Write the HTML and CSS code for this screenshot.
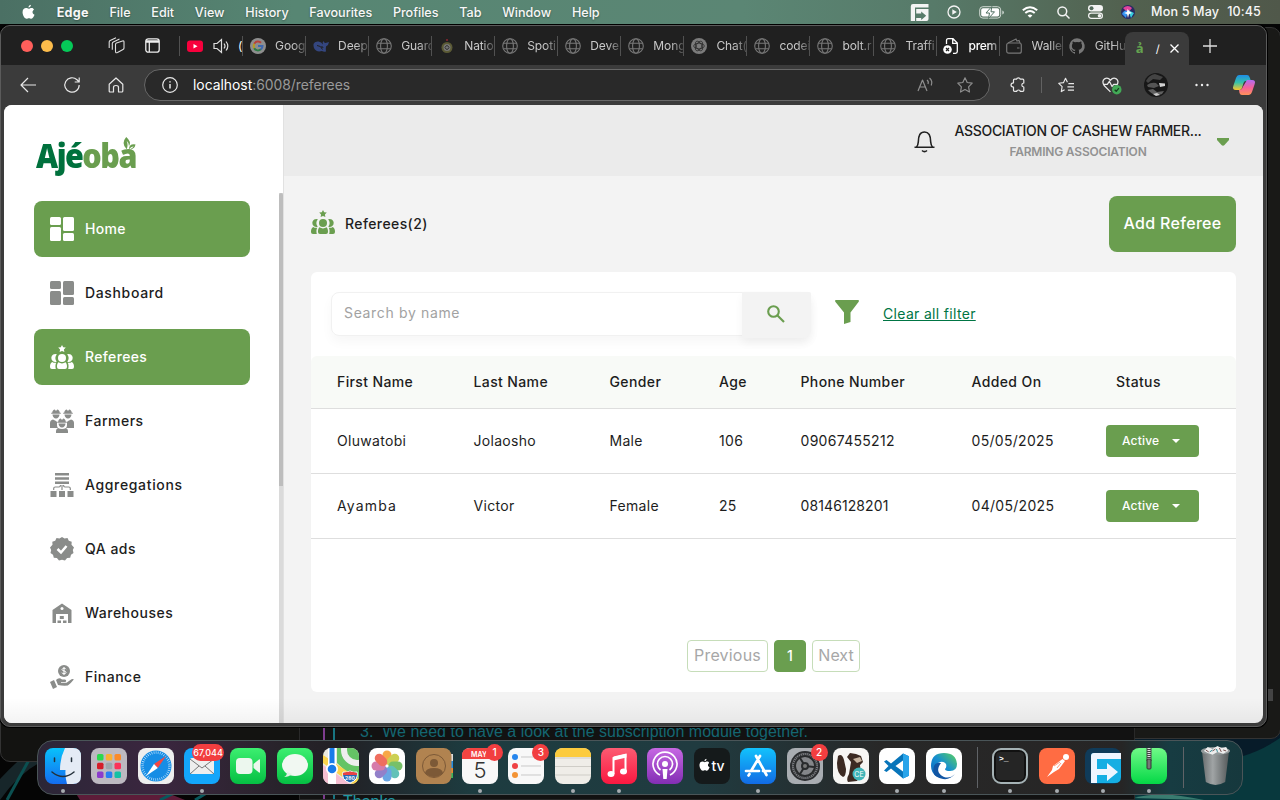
FILE: index.html
```html
<!DOCTYPE html>
<html lang="en">
<head>
<meta charset="utf-8">
<title>Referees</title>
<link rel="stylesheet" href="styles.css">
</head>
<body>
<svg class="defs" aria-hidden="true">
  <defs>
    <symbol id="globe" viewBox="0 0 16 16"><g fill="none" stroke="#777" stroke-width="1.1"><circle cx="8" cy="8" r="7.3"/><ellipse cx="8" cy="8" rx="3.4" ry="7.3"/><path d="M1.4 5.3h13.2M1.4 10.7h13.2"/></g></symbol>
    <symbol id="grid" viewBox="0 0 24 24"><rect width="11" height="8" rx="1.5"/><rect y="10" width="11" height="14" rx="1.5"/><rect x="13" width="11" height="14" rx="1.5"/><rect x="13" y="16" width="11" height="8" rx="1.5"/></symbol>
    <symbol id="referees" viewBox="0 0 24 24"><path d="M12 0l1.200 2.200 2.600.4-1.900 1.800.5 2.600L12 5.900 9.600 7l.5-2.600-1.900-1.800 2.600-.4z"/><circle cx="12" cy="13" r="4"/><path d="M6.900 9.300A4 4 0 1 0 6.700 16.700 6 6 0 0 1 6.900 9.300zM17.100 9.300a4 4 0 1 1 .2 7.400 6 6 0 0 0-.2-7.400zM0 21.500c0-2.200.8-3.800 2.200-4.500 1.200.8 2.800 1 4 .7-.8 1.500-1 4-.4 6.300H2C.7 24 0 23.200 0 21.500zM24 21.500c0-2.200-.8-3.800-2.200-4.500-1.200.8-2.800 1-4 .7.8 1.500 1 4 .4 6.300H22c1.300 0 2-.8 2-2.500zM7 21.500c0-2 .6-3.300 1.400-4.200 2.200 1.500 5 1.500 7.200 0 .8.900 1.400 2.200 1.400 4.200 0 1.700-.7 2.500-2 2.500H9c-1.300 0-2-.8-2-2.500z"/></symbol>
    <symbol id="farmer" viewBox="0 0 12 14"><path d="M1.200 3.800h1C2.300 1.600 3.500.7 4.800.4L6 2 7.200.4C8.500.7 9.700 1.600 9.800 3.800h1v1H1.200zM2.500 5.600h7C9.400 8 8 9.500 6 9.500S2.600 8 2.500 5.600z"/></symbol>
    <symbol id="apple" viewBox="0 0 14 16"><path d="M9.600.2c.1 1.600-1.200 3-2.600 3C6.800 1.700 8.200.3 9.600.2zM12.900 5.500c-2.300 1.300-2 4.400.6 5.400-.6 1.800-1.900 4.300-3.400 4.300-1 0-1.400-.6-2.600-.6s-1.600.6-2.600.6C2.600 15.200.6 11 .6 8.200.6 5.200 2.500 3.700 4.300 3.700c1.200 0 2.100.7 3 .7.800 0 1.800-.8 3.300-.8 1 0 1.800.5 2.300 1.900z"/></symbol>
  </defs>
</svg>

<header class="menubar">
  <nav class="menus">
    <svg class="apple-logo" viewBox="0 0 14 16" fill="#fff"><use href="#apple"/></svg>
    <b>Edge</b><span>File</span><span>Edit</span><span>View</span><span>History</span><span>Favourites</span><span>Profiles</span><span>Tab</span><span>Window</span><span>Help</span>
  </nav>
  <div class="tray">
    <svg width="19" height="19" viewBox="0 0 19 19"><path d="M3 1h15.500v3.500H5V18H.8V3.200Q.8 1 3 1z" fill="#f4f4f4"/><path d="M6.200 6h12.300v10q0 2-2 2H6.200v-3h5v2l5-4.300-5-4.200v2h-5z" fill="#f4f4f4"/></svg>
    <svg width="14" height="14" viewBox="0 0 14 14" fill="none" stroke="#f4f4f4" stroke-width="1.300"><circle cx="7" cy="7" r="6"/><path d="M5.300 4.300v5.400L9.800 7z" fill="#f4f4f4" stroke="none"/></svg>
    <svg width="25" height="13" viewBox="0 0 25 13"><rect x=".7" y=".7" width="21" height="11.400" rx="3.200" fill="none" stroke="#cfd8d2"/><rect x="2.200" y="2.200" width="18" height="8.400" rx="1.800" fill="#fff"/><path d="M23.300 4.500q1.600.3 1.600 2t-1.600 2z" fill="#cfd8d2"/><path d="M12.800.5L7 7h3.500L9.500 12.500 15.500 5.800H12z" fill="#fff" stroke="#537364"/></svg>
    <svg width="16" height="12" viewBox="0 0 16 12" fill="none" stroke="#fff" stroke-width="2"><path d="M.8 4.300q7.200-6.200 14.400 0M3.300 7q4.700-4 9.400 0"/><path d="M5.600 9.400L8 11.800l2.400-2.400Q8 7.600 5.600 9.400z" fill="#fff" stroke="none"/></svg>
    <svg width="13" height="13" viewBox="0 0 13 13" fill="none" stroke="#f4f4f4" stroke-width="1.500"><circle cx="5.300" cy="5.300" r="4.400"/><path d="M8.500 8.500l4 4"/></svg>
    <svg width="15" height="14" viewBox="0 0 15 14"><rect width="15" height="6.500" rx="3.200" fill="#f4f4f4"/><circle cx="3.500" cy="3.200" r="2" fill="#526a5c"/><rect x=".6" y="8.100" width="13.800" height="5.300" rx="2.600" fill="none" stroke="#f4f4f4" stroke-width="1.200"/><circle cx="11.500" cy="10.700" r="1.800" fill="#f4f4f4"/></svg>
    <svg class="siri" width="14" height="14" viewBox="0 0 14 14"><circle cx="7" cy="7" r="7" fill="#282a62"/><path d="M2 3Q7-1 11 3L7 8z" fill="#e1439c"/><path d="M1 9Q3 4 7 6l-2 7z" fill="#3695f1"/><path d="M7 5l6 3-3 5z" fill="#35cddb"/><path d="M6.500 4L9 7l2 1-3 1-1 4-1-4-3-1 3-1z" fill="#fff"/></svg>
    <span class="clock"><span>Mon 5 May</span><span>10:45</span></span>
  </div>
</header>

<main class="desktop">
  <svg class="wallpaper" viewBox="0 0 1280 776" preserveAspectRatio="none">
    <rect width="1280" height="776" fill="#050505"/>
    <path d="M0 755Q28 725 60 705V730Q25 740 0 776z" fill="#17262a"/><path d="M7 776L41 714" stroke="#0b4f50" stroke-width="3"/>
    <path d="M75 768h90l20 8H80z" fill="#5d1c39"/><path d="M160 776l20-10M195 776l20-12" stroke="#07575c" stroke-width="3"/>
    <rect x="1134" y="700" width="146" height="76" fill="#071b29"/><path d="M1180 735Q1235 745 1280 714V776h-146v-40z" fill="#08383d"/><path d="M1134 774q26-8 70 2z" fill="#397c70"/>
  </svg>
  <div class="back-window back-right"><i></i></div>
  <div class="back-window back-left"></div>
  <div class="notes"><p>3.&nbsp; We need to have a look at the subscription module together.</p><p class="thanks">Thanks</p></div>

  <section class="browser">
    <div class="tabstrip">
      <div class="lights"><i class="red"></i><i class="amber"></i><i class="green"></i></div>
      <div class="strip-tools">
        <svg width="17" height="17" viewBox="0 0 17 17" fill="none" stroke="#ddd" stroke-width="1.100" stroke-linejoin="round"><path d="M7.500 7.500q0-1 1-1.400L14.500 4q1.500-.4 1.500 1v6q0 1-1 1.500l-5.500 3q-2 .8-2-1zM4.300 12.800V6.500q0-1 1-1.500l6.200-3M1.200 11V5q0-1 1-1.500L8 .8"/></svg>
        <svg width="15" height="15" viewBox="0 0 15 15" fill="none" stroke="#eee" stroke-width="1.300"><rect x=".8" y=".8" width="13.400" height="13.400" rx="2.500"/><path d="M1 4.200h13M1 3h13M4.300 4v10"/></svg>
      </div>
      <div class="tabs">
        <div class="tab tab-audio"><svg class="fav" viewBox="0 0 16 16"><rect y="2.500" width="16" height="11.500" rx="3" fill="#f8003c"/><path d="M6.500 6v4.500l4-2.200z" fill="#fff"/></svg><svg class="fav" viewBox="0 0 16 16" fill="none" stroke="#ddd" stroke-width="1.200"><path d="M1 5.500h3l4.500-4v13l-4.500-4H1zM11 5.500q2 2.500 0 5M13 3.500q3.600 4.500 0 9"/></svg><span>(</span></div>
        <div class="tab"><svg class="fav" viewBox="0 0 16 16"><circle cx="8" cy="8" r="8" fill="#8e8e8e"/><g fill="none" stroke-width="2"><path d="M4.200 5.800A4.300 4.300 0 0 1 11 4.800" stroke="#b8403a"/><path d="M4.200 5.800a5 5 0 0 0 0 4.500" stroke="#b89a20"/><path d="M4.200 10.300a4.300 4.300 0 0 0 6.600 1" stroke="#2e7c46"/><path d="M8 8h4.500q0 2-1.700 3.500" stroke="#3e68b0"/></g></svg><span>Goog</span></div>
        <div class="tab"><svg class="fav" viewBox="0 0 16 16"><path d="M.5 6q1-3 5-2.500 3 .5 4.500 3Q9 4 10.500 3q.5 2 2 2L16 4q-.5 3.500-3 4.500-.5 3 0 5-2.500.5-4-.5-6 1.500-8-3Q.3 8 .500 6z" fill="#34467f"/><path d="M4 7.500q4 0 5.500 4M8 9q2-1 2 1" stroke="#202020" fill="none"/></svg><span>Deep</span></div>
        <div class="tab"><svg class="fav"><use href="#globe"/></svg><span>Guard</span></div>
        <div class="tab"><svg class="fav" viewBox="0 0 16 16"><circle cx="8" cy="9.500" r="5.500" fill="#5b5a35"/><circle cx="8" cy="9.500" r="3.500" fill="#777"/><path d="M6 9.500q2-4 4 0-2 4-4 0" fill="none" stroke="#333"/><circle cx="8" cy="2" r="1" fill="#8e2430"/></svg><span>Natio</span></div>
        <div class="tab"><svg class="fav"><use href="#globe"/></svg><span>Spoti</span></div>
        <div class="tab"><svg class="fav"><use href="#globe"/></svg><span>Deve</span></div>
        <div class="tab"><svg class="fav"><use href="#globe"/></svg><span>Mong</span></div>
        <div class="tab"><svg class="fav" viewBox="0 0 16 16"><circle cx="8" cy="8" r="8" fill="#7c7c7c"/><g fill="none" stroke="#2b2b2b" stroke-width=".8"><ellipse cx="8" cy="8" rx="5.300" ry="2.800"/><ellipse cx="8" cy="8" rx="5.300" ry="2.800" transform="rotate(60 8 8)"/><ellipse cx="8" cy="8" rx="5.300" ry="2.800" transform="rotate(120 8 8)"/></g></svg><span>Chat(</span></div>
        <div class="tab"><svg class="fav"><use href="#globe"/></svg><span>codei</span></div>
        <div class="tab"><svg class="fav"><use href="#globe"/></svg><span>bolt.r</span></div>
        <div class="tab"><svg class="fav"><use href="#globe"/></svg><span>Traffi</span></div>
        <div class="tab tab-bright"><svg class="fav" viewBox="0 0 16 16"><path d="M3.500 6V2.500Q3.500.7 5.200.7H10L14.300 5v8.500q0 1.800-1.800 1.800H10M9.700 1v4.300h4.500" fill="none" stroke="#fff" stroke-width="1.300"/><circle cx="4.500" cy="11.500" r="4.300" fill="#fff"/><path d="M3 10l3 3M6 10l-3 3" stroke="#222" stroke-width="1.200"/></svg><span>prem</span></div>
        <div class="tab"><svg class="fav" viewBox="0 0 16 16" fill="none" stroke="#777" stroke-width="1.200"><rect x=".7" y="5" width="14.600" height="10.200" rx="2"/><path d="M2 5l8-4 1 2 2-.5 1 2.500M11 10h2.500"/></svg><span>Walle</span></div>
        <div class="tab"><svg class="fav" viewBox="0 0 16 16"><path d="M8 .3a8 8 0 0 0-2.500 15.500c.4 0 .5-.2.500-.4v-1.500c-2.200.5-2.700-1-2.700-1-.4-.9-.9-1.100-.9-1.100-.7-.5.100-.5.100-.5.800 0 1.200.8 1.200.8.700 1.200 1.900.9 2.300.7.100-.5.300-.9.500-1.100-1.800-.2-3.600-.9-3.600-4 0-.8.300-1.500.8-2.100-.1-.2-.4-1 .1-2.100 0 0 .7-.2 2.200.8a7.500 7.500 0 0 1 4 0c1.500-1 2.200-.8 2.200-.8.500 1.100.2 1.900.1 2.100.5.600.8 1.300.8 2.100 0 3.100-1.900 3.800-3.600 4 .3.200.5.700.5 1.500v2.200c0 .2.100.4.500.4A8 8 0 0 0 8 .3z" fill="#777"/></svg><span>GitHu</span></div>
        <div class="tab active-tab"><span class="favicon-a">ả</span><span class="short-title">/</span><svg width="9" height="9" viewBox="0 0 9 9" stroke="#fff" stroke-width="1.300"><path d="M.5.5l8 8M8.500.5l-8 8"/></svg></div>
        <svg class="new-tab" width="14" height="14" viewBox="0 0 14 14" stroke="#ddd" stroke-width="1.300"><path d="M7 0v14M0 7h14"/></svg>
      </div>
    </div>

    <div class="toolbar">
      <div class="nav-tools">
        <svg viewBox="0 0 16 16"><path d="M16 8H1M8 1L1 8l7 7"/></svg>
        <svg viewBox="0 0 16 16"><path d="M15.200 8a7.200 7.200 0 1 1-2.200-5.200L15.200 5M15.200.5V5h-4.500"/></svg>
        <svg viewBox="0 0 16 16"><path d="M1.200 7.200L8 1l6.800 6.200V14q0 1-1 1h-3.300v-4.500q0-2-2.500-2t-2.500 2V15H2.200q-1 0-1-1z"/></svg>
      </div>
      <div class="address">
        <svg viewBox="0 0 16 16"><circle cx="8" cy="8" r="7.300"/><path d="M8 7v4.500M8 4.300v1.300" stroke-width="1.500"/></svg>
        <span class="url"><b>localhost</b>:6008/referees</span>
        <svg class="dim" viewBox="0 0 16 16"><path d="M1 14L5.500 3 10 14M2.500 10h6M10 3q2 1.500 1 4M12.500 1q3.500 3 1.700 7.500"/></svg>
        <svg class="dim" viewBox="0 0 16 16"><path d="M8 .8l2.200 4.700 5 .7-3.600 3.600.9 5.200L8 12.500l-4.500 2.500.9-5.200L.8 6.200l5-.7z"/></svg>
      </div>
      <div class="ext-tools">
        <svg viewBox="0 0 16 16"><path d="M4.500 2.200h2a2 2 0 0 1 3.800 0h2.500q1 0 1 1V6q-2 .3-2 2t2 2v3.300q0 1-1 1h-2.500q-.2-1.300-1.800-1.300t-1.800 1.300H4.500q-1 0-1-1V10Q1 10 1 8t2.500-2.200V3.200q0-1 1-1z"/></svg>
        <i class="bar"></i>
        <svg viewBox="0 0 17 16"><path d="M10 5L8 .8 5.800 5.500l-5 .7 3.600 3.600-.9 5.200L7 13M11 6.500h6M10 10h7M10.500 13.500H17"/></svg>
        <svg class="heart" viewBox="0 0 18 16"><path d="M8 14L2 8Q-.5 4 2.500 1.700 5.500 0 8 3q2.500-3 5.500-1.300Q16.500 4 14 8M1 7h4l2-3 2.500 5L11 7h3"/><circle cx="14" cy="12" r="4.500" fill="#42a956" stroke="none"/><path d="M12 12l1.500 1.500 2.500-3" stroke="#173c20"/></svg>
        <svg class="avatar" viewBox="0 0 24 24"><g stroke="none"><circle cx="12" cy="12" r="12" fill="#171717"/><path d="M2 8q3-6 9-7l8 3-3 3-7-1-5 4z" fill="#444"/><path d="M3 12q4-3 9-2l3 3-5 2-6-1z" fill="#555"/><path d="M15 10l6 .5v2.500l-5 1z" fill="#d0d0d0"/><path d="M4 17l5-1 4 3 7-1-2 3q-8 3-14-4z" fill="#606060"/><path d="M9 21l4-1 3 2-4 1z" fill="#ccc"/></g></svg>
        <svg viewBox="0 0 16 16"><g fill="#eee" stroke="none"><circle cx="2.500" cy="8" r="1.200"/><circle cx="8" cy="8" r="1.200"/><circle cx="13.500" cy="8" r="1.200"/></g></svg>
        <svg class="copilot" viewBox="0 0 22 20"><defs><linearGradient id="cp1" x2="0" y2="1"><stop stop-color="#1e8de8"/><stop offset=".5" stop-color="#35c1a9"/><stop offset="1" stop-color="#fbc52b"/></linearGradient><linearGradient id="cp2" x2="0" y2="1"><stop stop-color="#b16cf2"/><stop offset=".5" stop-color="#f4619c"/><stop offset="1" stop-color="#ff9158"/></linearGradient></defs><g stroke="none"><path d="M6 0h8q2 0 2.500 2L18 6h-5q-2 0-2.500 2L9 13q-.6 2-2.500 2H3Q-1 15 .3 11L3 3Q4 0 6 0z" fill="url(#cp1)"/><path d="M14 5h5q4 0 2.700 4L19 17q-1 3-3 3H9q-2 0-2.500-2L6 15q3 0 3.800-3z" fill="url(#cp2)"/></g></svg>
      </div>
    </div>

    <div class="page">
      <aside class="sidebar">
        <div class="logo"><div class="wordmark"><b>Ajé</b><b class="light">oba</b></div><svg viewBox="0 0 14 15" fill="#6a9e4f"><path d="M4.500 13Q-2 7 4 0q6 5 3 10 0-4-2.500-6 2 5 0 9zM7 13q0-6 7-5-1 5-6 5 3-1 4-3-3 .5-5 3z"/></svg></div>
        <div class="menu-scroll">
          <nav class="side-nav">
            <a class="nav-item selected"><svg><use href="#grid"/></svg><span>Home</span></a>
            <a class="nav-item roomy"><svg><use href="#grid"/></svg><span>Dashboard</span></a>
            <a class="nav-item selected"><svg><use href="#referees"/></svg><span>Referees</span></a>
            <a class="nav-item"><svg viewBox="0 0 24 24"><use href="#farmer" width="12" height="14"/><use href="#farmer" x="12" width="12" height="14"/><use href="#farmer" x="6" y="9" width="12" height="14"/><path d="M0 19v-5q0-3 3-3.500l3 1.500 1 1v3q0 2 1 3zM24 19v-5q0-3-3-3.500L18 12l-1 1v3q0 2-1 3zM6 24v-2q0-2 2-3 4 2 8 0 2 1 2 3v2z"/></svg><span>Farmers</span></a>
            <a class="nav-item roomy"><svg viewBox="0 0 24 24"><path d="M5 0h14v2.500H5zM5 4.200h14v2.500H5zM5 8.400h14v2.500H5zM.5 18H6.500v6h-6zM9 18h6v6H9zM17.500 18h6v6h-6z"/><path d="M3.700 17v-1.500q0-1.500 1.500-1.500H9q1.500 0 1.500-2M20.300 17v-1.500q0-1.500-1.500-1.500H15q-1.500 0-1.500-2M12 12v5" fill="none" stroke="#8a8c8a" stroke-width="1.200"/></svg><span>Aggregations</span></a>
            <a class="nav-item"><svg viewBox="0 0 24 24"><path d="M12 0l2.500 1.500 3-.5 1.300 2.700 2.900 1.100-.2 3L24 10.500 22.800 13l.7 3-2.500 1.700-.8 3-3.100.2L15 23.400l-3-.6-3 .6-2.100-2.500-3.100-.2-.8-3L.5 16l.7-3L0 10.500l2.500-2.700-.2-3 2.900-1.100L6.500 1l3 .5z"/><path d="M7.500 12l3.500 3.500L16.500 9" fill="none" stroke="#fff" stroke-width="2.500"/></svg><span>QA ads</span></a>
            <a class="nav-item"><svg viewBox="0 0 24 24"><path d="M12 2.500L21.500 9v13H18v-9H6v9H2.500V9z"/><circle cx="12" cy="7.600" r="1.500" fill="#fff"/><path d="M9.800 15h4v3h-4zM7.500 19.500h3.500V22H7.500zM13 19.500h3.500V22H13z"/></svg><span>Warehouses</span></a>
            <a class="nav-item"><svg viewBox="0 0 24 24"><circle cx="14" cy="6" r="6"/><path d="M16 4.200q-.5-1-2-1t-2 1.200q0 1.200 2 1.500t2 1.600q0 1.200-2 1.200t-2-1.100M14 2v8" fill="none" stroke="#fff" stroke-width="1"/><path d="M0 17l4-2 3 7-4 2zM6 15q3-3 6-.5h3q2 .8.500 2.500H11v.8h5.500l5-3.600q2-.7 2.300.4-2.500 3.400-6 5.900Q13 21 8 20z"/></svg><span>Finance</span></a>
          </nav>
          <div class="scroll-track"><i></i></div>
        </div>
      </aside>
      <div class="content">
        <div class="app-header">
          <svg class="bell" width="21" height="22" viewBox="0 0 21 22" fill="none" stroke="#222" stroke-width="1.600"><path d="M.5 16.200h20M2.500 16q1.500-1.500 1.800-5 0-10 6.200-10t6.200 10q.3 3.500 1.800 5"/><path d="M8 19.500q2.500 2.400 5 0"/></svg>
          <div class="account"><strong>ASSOCIATION OF CASHEW FARMER...</strong><span>FARMING ASSOCIATION</span></div>
          <svg class="caret" width="12" height="8" viewBox="0 0 12 8"><path d="M0 0h12v2L7.500 7Q6 8.500 4.500 7L0 2z" fill="#6a9e4f"/></svg>
        </div>
        <div class="body">
          <div class="title-row">
            <h1><svg><use href="#referees"/></svg><span>Referees(2)</span></h1>
            <button class="add">Add Referee</button>
          </div>
          <div class="card">
            <div class="filters">
              <div class="search"><span>Search by name</span><button><svg width="18" height="18" viewBox="0 0 18 18" fill="none" stroke="#6a9e4f" stroke-width="2.100"><circle cx="6.500" cy="6.500" r="5.300"/><path d="M10.500 10.500l6.500 6.500"/></svg></button></div>
              <svg class="funnel" width="24" height="24" viewBox="0 0 24 24" fill="#6a9e4f"><path d="M.5 0h23q1 .8 0 2L15.500 12.500V22L9 24V12.500L.5 2q-1-1.200 0-2z"/></svg>
              <a>Clear all filter</a>
            </div>
            <div class="table">
              <div class="row head"><span>First Name</span><span>Last Name</span><span>Gender</span><span>Age</span><span>Phone Number</span><span>Added On</span><span class="status-head">Status</span></div>
              <div class="row"><span>Oluwatobi</span><span>Jolaosho</span><span>Male</span><span>106</span><span>09067455212</span><span>05/05/2025</span><button><span>Active</span><svg width="8" height="4" viewBox="0 0 8 4"><path d="M0 0h8L4 4z" fill="#fff"/></svg></button></div>
              <div class="row"><span class="wide-name">Ayamba</span><span>Victor</span><span>Female</span><span>25</span><span class="narrow">08146128201</span><span>04/05/2025</span><button><span>Active</span><svg width="8" height="4" viewBox="0 0 8 4"><path d="M0 0h8L4 4z" fill="#fff"/></svg></button></div>
            </div>
            <div class="pager"><button class="prev">Previous</button><button class="current">1</button><button class="next">Next</button></div>
          </div>
        </div>
      </div>
      <div class="page-shade"></div>
    </div>
  </section>

  <footer class="dock">
    <div class="app running"><svg viewBox="0 0 36 36"><defs><linearGradient id="fd" x2="0" y2="1"><stop stop-color="#08c1fb"/><stop offset="1" stop-color="#146cef"/></linearGradient></defs><rect width="36" height="36" rx="8" fill="url(#fd)"/><path d="M20 0h8q8 0 8 8v20q0 8-8 8h-6q-2-7-1.500-14H15Q15 10 20 0z" fill="#e4ebf5"/><path d="M7 24q11 9 22 0M9.500 10v3.500M26.500 10v3.500" fill="none" stroke="#23303b" stroke-width="1.500" stroke-linecap="round"/></svg></div>
    <div class="app"><svg viewBox="0 0 36 36"><rect width="36" height="36" rx="8" fill="#bdb9c1"/><rect x="6" y="6" width="6.500" height="6.500" rx="1.500" fill="#2bd84e"/><rect x="14.800" y="6" width="6.500" height="6.500" rx="1.500" fill="#f9b032"/><rect x="23.500" y="6" width="6.500" height="6.500" rx="1.500" fill="#fb8a29"/><rect x="6" y="14.800" width="6.500" height="6.500" rx="1.500" fill="#d51d29"/><rect x="14.800" y="14.800" width="6.500" height="6.500" rx="1.500" fill="#9da7ad"/><rect x="23.500" y="14.800" width="6.500" height="6.500" rx="1.500" fill="#fb3259"/><rect x="6" y="23.500" width="6.500" height="6.500" rx="1.500" fill="#8b3ccc"/><rect x="14.800" y="23.500" width="6.500" height="6.500" rx="1.500" fill="#287ff2"/><rect x="23.500" y="23.500" width="6.500" height="6.500" rx="1.500" fill="#14c1a5"/></svg></div>
    <div class="app"><svg viewBox="0 0 36 36"><rect width="36" height="36" rx="8" fill="#eee"/><circle cx="18" cy="18" r="15.500" fill="#168de5"/><circle cx="18" cy="18" r="13.500" fill="none" stroke="#d5edff" stroke-width="2.500" stroke-dasharray=".6 1.500"/><path d="M28 8l-8.200 12L16 16z" fill="#f34742"/><path d="M8 28l8-12 3.800 4z" fill="#fff"/></svg></div>
    <div class="app running"><svg viewBox="0 0 36 36"><rect width="36" height="36" rx="8" fill="#13a6fb"/><rect x="6" y="10" width="24" height="16" rx="2" fill="#eee"/><path d="M6 11l12 9 12-9M6 26l9-8M30 26l-9-8" fill="none" stroke="#777" stroke-width="1"/></svg><em class="badge wide">67,044</em></div>
    <div class="app"><svg viewBox="0 0 36 36"><defs><linearGradient id="gr" x2="0" y2="1"><stop stop-color="#3cef70"/><stop offset="1" stop-color="#05bf43"/></linearGradient></defs><rect width="36" height="36" rx="8" fill="url(#gr)"/><rect x="6" y="10" width="16.500" height="16" rx="4" fill="#ecf7ee"/><path d="M23.500 16l5.500-4.500q1-.5 1 .5v12q0 1-1 .5L23.500 20z" fill="#ecf7ee"/></svg></div>
    <div class="app"><svg viewBox="0 0 36 36"><rect width="36" height="36" rx="8" fill="url(#gr)"/><ellipse cx="18" cy="17" rx="13" ry="11" fill="#f1f8f2"/><path d="M10 24q0 4-3 5 5 0 8-3z" fill="#e2f2e4"/></svg></div>
    <div class="app"><svg viewBox="0 0 36 36"><defs><clipPath id="rnd"><rect width="36" height="36" rx="8"/></clipPath></defs><g clip-path="url(#rnd)"><rect width="36" height="36" fill="#eceae0"/><path d="M14 0h22v36L14 15z" fill="#65c465"/><path d="M0 17l28 19H0z" fill="#f6bed1"/><path d="M0 7l36 24v5h-7L0 15z" fill="#fbd34d"/><circle cx="34" cy="2" r="13" fill="none" stroke="#eee" stroke-width="6"/><rect x="5" width="8" height="36" fill="#fff"/><rect x="6.500" width="5" height="18" fill="#197bea"/><circle cx="9" cy="21" r="6" fill="#fff"/><circle cx="9" cy="21" r="4.300" fill="#197bea"/></g><path d="M20 24q3 1 7-1 4 2 7 1 2 8-7 11-9-3-7-11z" fill="#2668b6" stroke="#fff"/><path d="M20 25q7-3 14 0v2H20z" fill="#e84245"/><text x="27" y="32" class="mini">280</text></svg></div>
    <div class="app"><svg viewBox="0 0 36 36"><rect width="36" height="36" rx="8" fill="#fff"/><g opacity=".85"><rect x="13.500" y="2.500" width="9" height="14" rx="4.500" fill="#f69a28"/><rect x="13.500" y="2.500" width="9" height="14" rx="4.500" fill="#c4c837" transform="rotate(45 18 18)"/><rect x="13.500" y="2.500" width="9" height="14" rx="4.500" fill="#60b650" transform="rotate(90 18 18)"/><rect x="13.500" y="2.500" width="9" height="14" rx="4.500" fill="#47b7ac" transform="rotate(135 18 18)"/><rect x="13.500" y="2.500" width="9" height="14" rx="4.500" fill="#5096df" transform="rotate(180 18 18)"/><rect x="13.500" y="2.500" width="9" height="14" rx="4.500" fill="#806bc0" transform="rotate(225 18 18)"/><rect x="13.500" y="2.500" width="9" height="14" rx="4.500" fill="#cf659c" transform="rotate(270 18 18)"/><rect x="13.500" y="2.500" width="9" height="14" rx="4.500" fill="#ed5544" transform="rotate(315 18 18)"/></g></svg></div>
    <div class="app"><svg viewBox="0 0 36 36"><path d="M31 6h6v24h-6z" fill="#dedede"/><path d="M35 13h2v7h-2z" fill="#258ee2"/><path d="M35 20h2v5h-2z" fill="#eb8a2f"/><path d="M35 25h2v5h-2z" fill="#38b55b"/><rect width="35.500" height="36" rx="8" fill="#b18350"/><circle cx="18" cy="18" r="11.500" fill="none" stroke="#7c5937"/><circle cx="18" cy="15" r="4" fill="#7c5937"/><path d="M9 25q1-5 9-5t9 5q-4 4-9 4t-9-4z" fill="#7c5937"/></svg></div>
    <div class="app running"><svg viewBox="0 0 36 36"><rect width="36" height="36" rx="8" fill="#f8f8f8"/><path d="M0 11V8q0-8 8-8h20q8 0 8 8v3z" fill="#f24441"/><text x="17" y="8.500" class="month">MAY</text><text x="18" y="30" class="day">5</text></svg><em class="badge">1</em></div>
    <div class="app"><svg viewBox="0 0 36 36"><rect width="36" height="36" rx="8" fill="#f8f8f8"/><path d="M13 9h20M13 18h20M13 27h20" stroke="#c9c9c9"/><circle cx="7" cy="9" r="3" fill="#2686ed"/><circle cx="7" cy="18" r="3" fill="#ef4244"/><circle cx="7" cy="27" r="3" fill="#f39436"/></svg><em class="badge">3</em></div>
    <div class="app running"><svg viewBox="0 0 36 36"><rect width="36" height="36" rx="8" fill="#efede8"/><path d="M0 9V8q0-8 8-8h20q8 0 8 8v1z" fill="#fccb3d"/><path d="M0 10h36M0 18.500h36M0 27h36" stroke="#cfcdc7"/></svg></div>
    <div class="app running"><svg viewBox="0 0 36 36"><defs><linearGradient id="mu" x2="0" y2="1"><stop stop-color="#fc5b72"/><stop offset="1" stop-color="#fb1840"/></linearGradient></defs><rect width="36" height="36" rx="8" fill="url(#mu)"/><path d="M12.500 26V10l12-3v16" fill="none" stroke="#fff" stroke-width="2"/><path d="M12.500 8.500l13-3v4l-13 3z" fill="#fff"/><ellipse cx="10" cy="26" rx="3.500" ry="3" fill="#fff"/><ellipse cx="22.500" cy="23.500" rx="3.500" ry="3" fill="#fff"/></svg></div>
    <div class="app"><svg viewBox="0 0 36 36"><defs><linearGradient id="po" x2="0" y2="1"><stop stop-color="#c668e3"/><stop offset="1" stop-color="#832eb4"/></linearGradient></defs><rect width="36" height="36" rx="8" fill="url(#po)"/><g fill="none" stroke="#fff" stroke-width="1.700"><path d="M13 27a12 12 0 1 1 10 0M13.500 22a7.500 7.500 0 1 1 9 0"/></g><circle cx="18" cy="16" r="3" fill="#fff"/><path d="M15.500 21h5l-.8 10h-3.400z" fill="#fff"/></svg></div>
    <div class="app"><svg viewBox="0 0 36 36"><rect width="36" height="36" rx="8" fill="#151a1b"/><use href="#apple" x="5" y="10.500" width="11" height="13" fill="#fff"/><text x="24" y="23" class="tv">tv</text></svg></div>
    <div class="app running"><svg viewBox="0 0 36 36"><defs><linearGradient id="as" x2="0" y2="1"><stop stop-color="#12c2fc"/><stop offset="1" stop-color="#126be5"/></linearGradient></defs><rect width="36" height="36" rx="8" fill="url(#as)"/><path d="M16 8l10.500 19M20 8L11 23M6 23h13M23 23h7M9.500 26l-1 1.500" fill="none" stroke="#fff" stroke-width="2.700" stroke-linecap="round"/></svg></div>
    <div class="app"><svg viewBox="0 0 36 36"><rect width="36" height="36" rx="8" fill="#a9adb2"/><circle cx="18" cy="18" r="14" fill="#84868a" stroke="#2b2d30" stroke-width="2"/><circle cx="18" cy="18" r="10" fill="none" stroke="#292b2d" stroke-width="2"/><circle cx="18" cy="18" r="11.800" fill="none" stroke="#303236" stroke-width="2" stroke-dasharray="1 1"/><path d="M18 18l9 1M18 18l-5-8M18 18l-5 8" stroke="#292b2d" stroke-width="2"/><circle cx="18" cy="18" r="3" fill="#777" stroke="#292b2d" stroke-width="2"/></svg><em class="badge">2</em></div>
    <div class="app"><svg viewBox="0 0 36 36"><rect width="36" height="36" rx="8" fill="#f7f6f4"/><path d="M5 8q4-3 6 4l2 9q0 7-3 8-6-3-6-14zM14 9l3-4 6 1 5 2 2 6-3 3 1 10-4 6-9 1q-2-3 1-8l2-12z" fill="#3c2a22"/><path d="M20 11l7-2 2 4-5 2z" fill="#c7b4a0"/><circle cx="26" cy="26" r="6.500" fill="#41b5b8"/><text x="26" y="28.500" class="ce">CE</text></svg></div>
    <div class="app running"><svg viewBox="0 0 36 36"><rect width="36" height="36" rx="8" fill="#fff"/><path d="M24 5.500l6 2.700v19.600l-6 2.700-12-10-4.500 3.500L5 22.500 9.500 18 5 13.500 7.500 12l4.500 3.500zM24 12.500L16.500 18l7.500 5.500z" fill="#0875ba"/><path d="M24 5.500l6 2.700v19.600l-6 2.700z" fill="#28a4ea"/></svg></div>
    <div class="app running"><svg viewBox="0 0 36 36"><defs><linearGradient id="ed" x1="0" y1="1" x2="1" y2="0"><stop stop-color="#0c65bd"/><stop offset=".5" stop-color="#168fd0"/><stop offset="1" stop-color="#5ed35b"/></linearGradient></defs><rect width="36" height="36" rx="8" fill="#fff"/><path d="M5 18Q5 5 18 5q12 0 13 11 0 7-7 7-5 0-5-2 2-2 1-5-3-4-8-1-7 6-1 14-6-4-6-11z" fill="url(#ed)"/><path d="M15 15q-7 9 3 14 6 2 11-3-6 7-14 4.500Q5 28 8 18q2-4 7-3z" fill="#1256a4"/></svg></div>
    <i class="dock-bar"></i>
    <div class="app running"><svg viewBox="0 0 36 36"><rect x="1" y="1" width="34" height="34" rx="8" fill="#111" stroke="#a5b2b5" stroke-width="2"/><rect x="4" y="4" width="28" height="28" rx="4" fill="#252525"/><text x="7" y="13" class="prompt">&gt;_</text></svg></div>
    <div class="app running"><svg viewBox="0 0 36 36"><rect width="36" height="36" rx="8" fill="#ff6c43"/><circle cx="27" cy="9" r="3" fill="#fff"/><path d="M23.500 11l2.500 2-6 8-5 3-7 5 5-7 1-4z" fill="#fff"/><path d="M15 18l6-4M18 20l4-5" stroke="#ff6c43" stroke-width=".7"/></svg></div>
    <div class="app running"><svg viewBox="0 0 36 36"><rect width="36" height="36" rx="8" fill="#103b59"/><path d="M6 35V8q0-3 3-3h27v24q0 6-6 6z" fill="#15aee3"/><path d="M6 35V8q0-3 3-3h27v6H12v24z" fill="#eef5ff"/><path d="M12 21h10v-6l11 9-11 9v-6H12z" fill="#eef5ff"/></svg></div>
    <div class="app running"><svg viewBox="0 0 36 36"><defs><linearGradient id="zip" x2="0" y2="1"><stop stop-color="#70fa88"/><stop offset="1" stop-color="#04d846"/></linearGradient></defs><rect width="36" height="36" rx="8" fill="url(#zip)"/><path d="M18 0v13" stroke="#444" stroke-width="5"/><path d="M18 0v12" stroke="#ddd" stroke-width="3" stroke-dasharray="1 1"/><rect x="16" y="11" width="4" height="10" rx="1" fill="#777" stroke="#333"/></svg></div>
    <i class="dock-bar"></i>
    <div class="app trash"><svg viewBox="0 0 34 42"><defs><linearGradient id="tr"><stop stop-color="#686c6d"/><stop offset=".4" stop-color="#a0a4a5"/><stop offset="1" stop-color="#535859"/></linearGradient></defs><path d="M3 6h28l-4 32q-10 6-20 0z" fill="url(#tr)"/><ellipse cx="17" cy="6" rx="15" ry="4" fill="#91999a"/><path d="M5 6l4-4 5 2 5-3 4 2 5-1 2 4-5 3-6-2-5 3-5-2z" fill="#eee"/><path d="M7 5l3 2M14 6l3-2M21 3l2 4M25 5l3 1" stroke="#754f4d"/><path d="M11 7l3-2M18 4l1 3" stroke="#2c8792"/></svg></div>
  </footer>
</main>
</body>
</html>
```

FILE: styles.css
```css
* { box-sizing: border-box; }
body { margin: 0; width: 1280px; height: 800px; overflow: hidden; display: flex; flex-direction: column; background: #050505; font-family: Inter, "Liberation Sans", sans-serif; color: #1d1d1d; }
button { font: inherit; border: 0; padding: 0; }
svg { display: block; flex: none; overflow: visible; }
.defs { position: absolute; width: 0; height: 0; }

/* System menu bar */
.menubar { height: 24px; flex: none; display: flex; justify-content: space-between; padding: 0 19px 0 22px; background: linear-gradient(90deg, #4b7064, #578673 23%, #5b8674 58%, #577a69 73%, #52614f 88%, #50584a); color: #f7f7f7; font-size: 12.6px; font-weight: 500; }
.menus { display: flex; align-items: center; gap: 20.7px; letter-spacing: 0; text-shadow: 0 1px 2px #0005; }
.apple-logo { width: 13px; height: 16px; margin-right: 1px; }
.menus b { letter-spacing: .25px; }
.tray { display: flex; align-items: center; gap: 18.200px; }
.clock { display: flex; gap: 8px; margin: -2px 0 0 -2px; letter-spacing: .13px; }

.desktop { position: relative; flex: 1; overflow: hidden; }
.wallpaper { position: absolute; inset: 0; width: 1280px; height: 776px; }
.back-window { position: absolute; background: #131311; border: 1px solid #333; }
.back-right { left: 1100px; top: 3px; width: 181px; height: 712px; border-radius: 10px; background: #191917; }
.back-right i { position: absolute; right: 7px; bottom: 37px; width: 5px; height: 12px; background: #444; }
.back-left { left: 0; top: 600px; width: 310px; height: 138px; border-radius: 10px; }
.notes { position: absolute; left: 299px; top: 690px; width: 836px; height: 86px; padding: 8px 0 0 60px; background: linear-gradient(90deg, transparent 23px, #7d3c8e 23px 25px, transparent 25px 33px, #187581 33px 35px, transparent 35px), #121212; border: 1px solid #292929; font: 16px/18px "Liberation Sans", sans-serif; color: #146671; }
.notes p { margin: 0; white-space: nowrap; }
.notes .thanks { margin: 52px 0 0 -17px; color: #1f97a3; }

/* Browser window */
.browser { position: absolute; left: 0; top: 1px; width: 1267px; height: 702px; border: 1px solid #5b5b5b; border-radius: 10px; overflow: hidden; background: #3b3b3b; display: flex; flex-direction: column; box-shadow: 0 0 0 1px #000; }
.tabstrip { height: 39px; flex: none; background: #202020; display: flex; align-items: center; padding-left: 20px; }
.lights { display: flex; gap: 8px; width: 87px; }
.lights i { width: 12px; height: 12px; border-radius: 50%; }
.red { background: #ff5f5b; } .amber { background: #fdbc4b; } .green { background: #05c958; }
.strip-tools { display: flex; align-items: center; gap: 20px; width: 71px; }
.tabs { display: flex; align-items: center; height: 39px; }
.tab { width: 63.06px; height: 20px; flex: none; display: flex; align-items: center; padding-left: 6.500px; border-left: 1px solid #515151; font-size: 12px; color: #c8c8c8; }
.tab > span { width: 30px; margin-left: 9.500px; white-space: nowrap; letter-spacing: -.1px; -webkit-mask-image: linear-gradient(90deg, #000 60%, #0004); mask-image: linear-gradient(90deg, #000 60%, #0004); }
.fav { width: 16px; height: 16px; }
.tab-audio .fav + .fav { margin-left: 10px; }
.tab-audio > span { width: 5px; color: #fff; -webkit-mask-image: none; mask-image: none; }
.tab-bright { color: #fff; font-weight: 500; }
.tab-bright > span { letter-spacing: -.35px; }
.active-tab { height: 33px; width: 64px; margin-top: 6px; border: 0; border-radius: 8px 8px 0 0; background: #3b3b3b; padding-left: 11px; }
.active-tab .favicon-a { width: 9px; margin: -2px 0 0; color: #65a450; font: 700 13px "Open Sans", sans-serif; -webkit-mask-image: none; mask-image: none; }
.active-tab .short-title { width: 5px; margin: 0 9px 0 11px; color: #fff; font-size: 11px; -webkit-mask-image: none; mask-image: none; }
.new-tab { margin-left: 14px; }
.toolbar { height: 40px; flex: none; display: flex; align-items: center; padding-left: 19px; }
.toolbar svg { width: 16px; height: 16px; fill: none; stroke: #e8e8e8; stroke-width: 1.200; stroke-linejoin: round; }
.nav-tools { display: flex; gap: 28px; width: 124px; }
.address { width: 846px; height: 32px; border: 1px solid #686868; border-radius: 16px; background: #292929; display: flex; align-items: center; padding: 0 16px 0 17px; }
.url { margin: 0 auto 0 15px; color: #999; font-size: 13.9px; letter-spacing: -.02px; }
.url b { color: #fff; font-weight: 400; }
.address .dim { stroke: #8e8e8e; margin-left: 24px; }
.ext-tools { display: flex; align-items: center; padding-left: 20px; gap: 16px; }
.bar { width: 1px; height: 16px; background: #626262; margin-left: -1px; }
.toolbar .heart { width: 19px; height: 17px; margin-left: 12px; }
.toolbar .avatar { width: 24px; height: 24px; margin: 0 10px 0 7px; }
.toolbar .copilot { width: 22px; height: 20px; margin-left: 7px; }

/* Application page */
.page { position: relative; width: 1259px; height: 618px; margin-left: 3px; border-radius: 8px; overflow: hidden; display: flex; background: #f3f3f3; }
.page-shade { position: absolute; inset: auto 0 0; height: 25px; background: linear-gradient(transparent, #0000000c); }
.sidebar { width: 280px; height: 618px; background: #fff; border-right: 1px solid #e1e1e1; display: flex; flex-direction: column; }
.logo { position: relative; height: 88px; flex: none; padding: 26px 0 0 32px; font: 800 33px/50px "Open Sans", sans-serif; letter-spacing: -1.650px; color: #00713d; }
.wordmark { transform: scaleX(.925); transform-origin: left; }
.logo .light { color: #6a9e4f; }
.logo b { font-weight: 800; }
.logo svg { position: absolute; left: 118px; top: 32px; width: 14px; height: 14px; }
.menu-scroll { flex: 1; display: flex; justify-content: space-between; min-height: 0; }
.side-nav { padding: 8px 0 0 30px; display: flex; flex-direction: column; gap: 8px; }
.nav-item { width: 216px; height: 56px; flex: none; border-radius: 8px; display: flex; align-items: center; gap: 11px; padding-left: 16px; font-size: 14px; font-weight: 500; letter-spacing: .5px; }
.nav-item span { margin-bottom: 2px; }
.nav-item svg { width: 24px; height: 24px; fill: #8a8c8a; }
.nav-item.roomy { letter-spacing: .65px; }
.selected { background: #6a9e4f; color: #fff; letter-spacing: .35px; }
.selected svg { fill: #fff; }
.scroll-track { width: 4px; background: #dadada; }
.scroll-track i { display: block; height: 293px; border-radius: 2px 2px 0 0; background: #bdbdbd; }
.content { flex: 1; }
.app-header { height: 71px; background: #ebebeb; display: flex; align-items: center; padding: 2px 34px 0 0; justify-content: flex-end; }
.account { width: 250px; margin: -1px 14px 0 18px; display: flex; flex-direction: column; align-items: center; font-size: 14px; line-height: 21px; white-space: nowrap; }
.account strong { font-weight: 500; letter-spacing: -.31px; }
.account span { color: #929292; font-size: 12px; font-weight: 600; letter-spacing: -.2px; }
.body { padding: 20px 27px; }
.title-row { height: 56px; display: flex; align-items: center; justify-content: space-between; }
h1 { margin: 0; display: flex; align-items: center; gap: 10px; font-size: 14px; font-weight: 500; letter-spacing: .4px; }
h1 span { margin-bottom: 2px; }
h1 svg { width: 24px; height: 24px; fill: #6a9e4f; margin-bottom: 5px; }
.add { width: 127px; height: 56px; padding-bottom: 2px; border-radius: 8px; background: #6a9e4f; color: #fff; font-size: 16px; font-weight: 500; letter-spacing: .32px; }
.card { width: 925px; height: 420px; margin-top: 20px; border-radius: 6px; background: #fff; display: flex; flex-direction: column; }
.filters { height: 84px; padding: 20px; display: flex; align-items: flex-start; font-size: 14px; }
.search { width: 480px; height: 44px; border: 1px solid #f1f1f1; border-radius: 8px; display: flex; justify-content: space-between; align-items: center; padding-left: 12px; color: #a2a2a2; letter-spacing: .65px; box-shadow: 0 6px 12px #00000009; }
.search > span { margin-bottom: 3px; }
.search button { width: 69px; height: 46px; margin: 1px -1px 0 0; background: #f3f3f3; border-radius: 0 2px 8px 0; display: flex; align-items: center; justify-content: center; box-shadow: 0 5px 10px #0000000c; }
.search button svg { margin: -2px 2px 0 0; }
.funnel { margin: 8px 24px 0 24px; }
.filters a { margin-top: 13px; color: #007544; text-decoration: underline; letter-spacing: .32px; }
.row { height: 65px; border-bottom: 1px solid #dedede; padding-left: 26px; display: grid; grid-template-columns: 136.500px 136px 109.500px 81.500px 171px 134.500px 94px; align-items: center; font-size: 14px; letter-spacing: .3px; }
.row > span { margin-bottom: 2px; }
.row .wide-name { letter-spacing: 1.150px; }
.row .narrow { letter-spacing: .1px; }
.head { height: 53px; background: #f8faf7; font-weight: 500; border-radius: 6px 6px 0 0; letter-spacing: .38px; }
.status-head { padding-left: 10px; }
.row button { width: 93px; height: 32px; border-radius: 4px; background: #6a9e4f; color: #fff; font-size: 12px; font-weight: 500; letter-spacing: .2px; display: flex; align-items: center; gap: 13px; padding-left: 16px; }
.row button span { margin-bottom: 1px; }
.pager { height: 32px; margin: auto 0 20px 376px; display: flex; gap: 6px; font-size: 16px; }
.pager button { height: 32px; padding-bottom: 2px; border: 1px solid #c6ddb9; border-radius: 4px; background: #fff; color: #a7a7a7; text-align: center; }
.pager .prev { width: 81px; letter-spacing: .2px; } .pager .next { width: 48px; }
.pager .current { width: 32px; background: #6a9e4f; border-color: #6a9e4f; color: #fff; font-size: 14px; font-weight: 500; }

/* Dock */
.dock { position: absolute; left: 37px; top: 716px; width: 1206px; height: 55px; border: 1px solid #4a5558; border-radius: 16px; background: linear-gradient(90deg, #2b2637, #3b263f 10%, #28232b 20%, #222025 25%, #1d3c40 36%, #203b40 55%, #282828 70%, #262525 90%, #173c42 94%, #16383d); display: flex; padding: 7px 0 0 7px; gap: 10.350px; }
.app { position: relative; width: 36px; height: 36px; flex: none; }
.app > svg { width: 36px; height: 36px; }
.running::after { content: ""; position: absolute; left: 16px; top: 41px; width: 4px; height: 4px; border-radius: 50%; background: #a7acb0; }
.badge { position: absolute; right: -5px; top: -4px; min-width: 17px; height: 17px; padding: 0 4px; border-radius: 9px; background: #f23e40; color: #fff; font: 500 10px/17px Inter, sans-serif; text-align: center; }
.badge.wide { right: -4px; width: 32px; padding: 0; font-size: 9px; }
.dock-bar { width: 1px; height: 41px; margin: -1px 4px 0 5px; background: #606367; }
.dock-bar + .app.trash > svg { width: 33px; height: 41px; margin: -3px 0 0 1px; }
.mini, .month, .day, .tv, .ce { fill: #fff; text-anchor: middle; font-family: Inter, sans-serif; }
.mini { font-size: 5px; font-weight: 700; } .month { font-size: 7px; font-weight: 600; } .day { font-size: 22px; fill: #333; font-weight: 300; } .tv { font-size: 14px; font-weight: 500; } .ce { font-size: 7px; } .prompt { fill: #fff; font: 700 8px "Liberation Mono", monospace; }
```
